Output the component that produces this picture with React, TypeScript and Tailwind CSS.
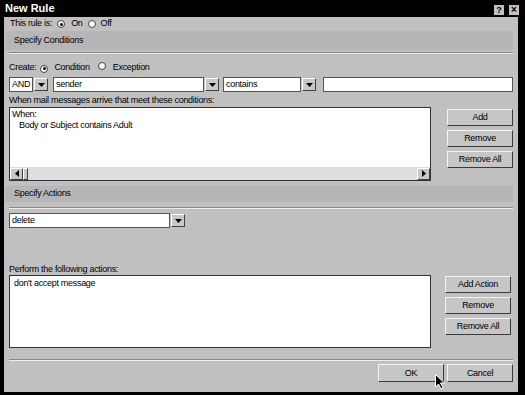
import React from 'react';

const font = { fontFamily: '"Liberation Sans", Arial, sans-serif' };

function Radio({ checked }: { checked?: boolean }) {
  return (
    <span className="inline-flex w-[8px] h-[8px] rounded-full bg-white border border-[#404040] items-center justify-center">
      {checked && <span className="w-[3px] h-[3px] rounded-full bg-black" />}
    </span>
  );
}

function DropBtn() {
  return (
    <span className="flex w-[14px] h-[13px] shrink-0 items-center justify-center bg-[#c8c8c8] border border-t-white border-l-white border-b-[#404040] border-r-[#404040]">
      <svg width="7" height="4" viewBox="0 0 7 4">
        <path d="M0 0 H7 L3.5 4 Z" fill="#000" />
      </svg>
    </span>
  );
}

function Combo({ text, w }: { text: string; w: string }) {
  return (
    <div className={`flex items-center h-[15px] ${w} shrink-0 gap-[1px]`}>
      <div className="flex-1 h-full bg-white border border-[#555] pl-[2px] text-[9px] leading-[13px] text-black overflow-hidden">
        {text}
      </div>
      <DropBtn />
    </div>
  );
}

function Btn({ label, w = 'w-[66px]', h = 'h-[17px]' }: { label: string; w?: string; h?: string }) {
  return (
    <button
      type="button"
      className={`${w} ${h} bg-[#c6c6c6] border border-t-[#f4f4f4] border-l-[#f4f4f4] border-b-[#3a3a3a] border-r-[#3a3a3a] text-[9px] tracking-[-0.3px] leading-none text-black flex items-center justify-center`}
    >
      {label}
    </button>
  );
}

function Separator({ mt }: { mt: string }) {
  return (
    <div className={`${mt} h-[2px] border-t border-t-[#8a8a8a] border-b border-b-[#ececec]`} />
  );
}

function Band({ label, h, mt }: { label: string; h: string; mt: string }) {
  return (
    <div className={`${mt} ${h} -ml-[4px] flex items-center pl-[9px] bg-[#b6b6b6] text-[9px] text-black`}>
      {label}
    </div>
  );
}

function Arrow({ dir }: { dir: 'l' | 'r' }) {
  return (
    <span className="flex w-[13px] h-[12px] items-center justify-center bg-[#c8c8c8] border border-t-white border-l-white border-b-[#404040] border-r-[#404040]">
      <svg width="4" height="7" viewBox="0 0 4 7">
        <path d={dir === 'l' ? 'M4 0 V7 L0 3.5 Z' : 'M0 0 V7 L4 3.5 Z'} fill="#000" />
      </svg>
    </span>
  );
}

export default function App() {
  return (
    <div className="w-[525px] h-[395px] bg-black flex flex-col overflow-hidden relative tracking-[-0.3px]" style={font}>
      {/* Title bar */}
      <div className="h-[17px] flex items-center justify-between pl-[5px] pr-[6px] tracking-normal">
        <span className="text-white font-bold text-[11px]">New Rule</span>
        <div className="flex gap-[5px] mt-[3px]">
          <span className="w-[10px] h-[10px] bg-[#c0c0c0] flex items-center justify-center text-[9px] font-bold text-black leading-none">?</span>
          <span className="w-[10px] h-[10px] bg-[#c0c0c0] flex items-center justify-center text-[10px] font-bold text-black leading-none">×</span>
        </div>
      </div>

      <div className="ml-[4px] mr-[7px] mb-[3px] flex-1 bg-[#c0c0c0] px-[5px] flex flex-col text-black">
        <div className="h-[14px] flex items-center gap-[5px] pl-[1px] text-[9px]">
          <span>This rule is:</span>
          <Radio checked />
          <span className="ml-[1px]">On</span>
          <Radio />
          <span>Off</span>
        </div>

        <Band label="Specify Conditions" h="h-[19px]" mt="mt-0" />
        <Separator mt="mt-[2px]" />

        <div className="mt-[7px] h-[14px] flex items-center text-[9px]">
          <span>Create:</span>
          <span className="ml-[4px]"><Radio checked /></span>
          <span className="ml-[6px]">Condition</span>
          <span className="ml-[8px]"><Radio /></span>
          <span className="ml-[7px]">Exception</span>
        </div>

        <div className="mt-[2px] flex items-center">
          <Combo text="AND" w="w-[39px]" />
          <div className="w-[5px]" />
          <Combo text="sender" w="w-[166px]" />
          <div className="w-[4px]" />
          <Combo text="contains" w="w-[93px]" />
          <div className="w-[7px]" />
          <div className="flex-1 h-[15px] bg-white border border-[#555]" />
        </div>

        <div className="mt-[2px] h-[12px] text-[9px] leading-[12px]">
          When mail messages arrive that meet these conditions:
        </div>

        <div className="mt-[1px] flex justify-between">
          <div className="w-[422px] h-[74px] bg-white border border-[#333] flex flex-col">
            <div className="flex-1 pl-[2px] pt-[1px] text-[9px] leading-[11px]">
              <div>When:</div>
              <div className="pl-[7px]">Body or Subject contains Adult</div>
            </div>
            <div className="h-[13px] bg-[#dedede] flex items-center justify-between">
              <div className="flex items-center">
                <Arrow dir="l" />
                <span className="w-[5px] h-[12px] bg-[#c8c8c8] border border-t-white border-l-white border-b-[#404040] border-r-[#404040]" />
              </div>
              <Arrow dir="r" />
            </div>
          </div>
          <div className="mt-[2px] flex flex-col gap-[4px]">
            <Btn label="Add" />
            <Btn label="Remove" />
            <Btn label="Remove All" />
          </div>
        </div>

        <Band label="Specify Actions" h="h-[16px]" mt="mt-[5px]" />
        <Separator mt="mt-[5px]" />

        <div className="mt-[4px]">
          <Combo text="delete" w="w-[176px]" />
        </div>

        <div className="mt-[36px] h-[11px] text-[9px] leading-[11px]">
          Perform the following actions:
        </div>

        <div className="flex justify-between">
          <div className="w-[422px] h-[73px] bg-white border border-[#333] pl-[4px] pt-[1px] text-[9px] leading-[12px]">
            don't accept message
          </div>
          <div className="mt-[1px] mr-[2px] flex flex-col gap-[4px]">
            <Btn label="Add Action" />
            <Btn label="Remove" />
            <Btn label="Remove All" />
          </div>
        </div>

        <Separator mt="mt-[11px]" />

        <div className="mt-[3px] flex justify-end gap-[3px]">
          <Btn label="OK" h="h-[18px]" />
          <Btn label="Cancel" h="h-[18px]" />
        </div>
      </div>

      {/* mouse cursor */}
      <svg className="absolute left-[435px] top-[374px]" width="10" height="16" viewBox="0 0 10 16">
        <path d="M0.5 0.5 V13 L3.5 10 L6 15 L8 14 L5.5 9 H9.5 Z" fill="#000" stroke="#fff" strokeWidth="1" />
      </svg>
    </div>
  );
}
